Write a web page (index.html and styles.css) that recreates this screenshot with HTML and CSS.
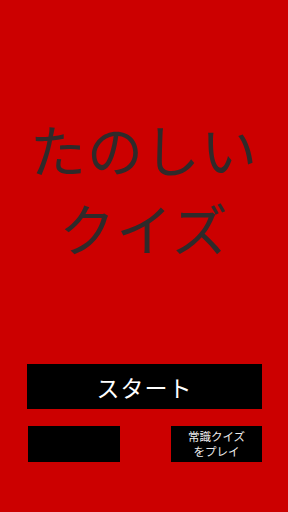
FILE: index.html
```html
<!DOCTYPE html>
<html lang="ja">
<head>
<meta charset="utf-8">
<link rel="stylesheet" href="styles.css">
</head>
<body>
<main class="screen">
  <h1 class="title"><span>たのしい</span><span>クイズ</span></h1>
  <button class="start">スタート</button>
  <div class="row">
    <div class="box"></div>
    <div class="box box-text"><span>常識クイズ</span><span>をプレイ</span></div>
  </div>
</main>
</body>
</html>
```
FILE: styles.css
```css
html, body {
  margin: 0;
  padding: 0;
  background: #cc0000;
}
.screen {
  width: 288px;
  height: 512px;
  display: flex;
  flex-direction: column;
  font-family: "Noto Sans CJK JP", sans-serif;
}
.title {
  margin: 108px 0 0;
  display: flex;
  flex-direction: column;
  align-items: center;
  font-size: 56px;
  line-height: 79px;
  font-weight: 400;
  color: #2f2a2a;
  letter-spacing: 1px;
}
.start {
  margin: 98px 0 0 27px;
  width: 235px;
  height: 45px;
  border: 0;
  padding: 0;
  background: #000;
  color: #fff;
  font-family: "Noto Sans CJK JP", sans-serif;
  font-size: 23px;
  font-weight: 400;
  letter-spacing: 1px;
}
.row {
  margin-top: 17px;
  display: flex;
  justify-content: space-between;
  padding: 0 26px 0 28px;
}
.box {
  width: 92px;
  height: 36px;
  background: #000;
}
.box-text {
  width: 91px;
  color: #eee;
  font-size: 11.5px;
  display: flex;
  flex-direction: column;
  align-items: center;
  justify-content: center;
}
.box-text span {
  display: block;
  height: 15px;
  line-height: 15px;
}
```
